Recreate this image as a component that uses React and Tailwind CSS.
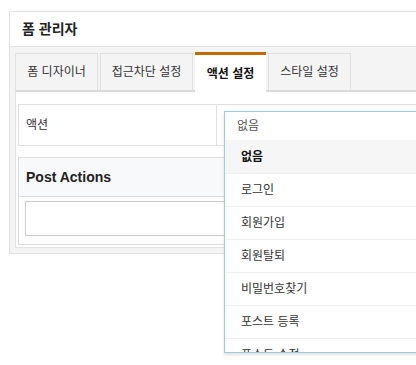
import React from 'react';

const tabs = [
  { label: '폼 디자이너', w: 'w-[83px]' },
  { label: '접근차단 설정', w: 'w-[93px]' },
  { label: '액션 설정', w: 'w-[71px]', active: true },
  { label: '스타일 설정', w: 'w-[83px]' },
];

const options = ['없음', '로그인', '회원가입', '회원탈퇴', '비밀번호찾기', '포스트 등록', '포스트 수정'];

export default function App() {
  return (
    <div
      className="relative w-[416px] h-[365px] overflow-hidden bg-white pt-[11px] pl-[9px] text-[#333]"
      style={{ fontFamily: '"Liberation Sans", "Noto Sans CJK KR", sans-serif' }}
    >
      {/* Form manager panel */}
      <div className="w-[430px] border border-[#e2e2e2] bg-[#f4f4f4]">
        <div className="h-[35px] bg-white border-b border-[#e2e2e2] flex items-center px-[12px]">
          <span className="text-[14px] font-bold text-[#222] leading-none">폼 관리자</span>
        </div>

        <div className="pt-[5px] px-[5px] pb-[5px]">
          {/* Tabs */}
          <div className="flex items-end gap-[2px] border-b-2 border-[#dadada]">
            {tabs.map((t) =>
              t.active ? (
                <div
                  key={t.label}
                  className={`${t.w} h-[40px] -mb-[2px] bg-white border-t-[3px] border-t-[#c46a00] flex items-center justify-center text-[12px] font-bold text-[#111]`}
                >
                  {t.label}
                </div>
              ) : (
                <div
                  key={t.label}
                  className={`${t.w} h-[37px] border border-b-0 border-[#e0e0e0] flex items-center justify-center text-[12px] text-[#333]`}
                >
                  {t.label}
                </div>
              )
            )}
          </div>

          {/* Tab content */}
          <div className="bg-white border border-t-0 border-[#e2e2e2] px-[2px] pt-[12px] pb-[2px]">
            <div className="h-[42px] border border-[#e0e0e0] flex">
              <div className="w-[198px] border-r border-[#e0e0e0] flex items-center px-[7px] text-[12px] text-[#333]">
                액션
              </div>
              <div className="flex-1" />
            </div>

            <div className="mt-[11px] border border-[#dddddd]">
              <div className="h-[39px] bg-[#f8f9fa] border-b border-[#dddddd] flex items-center px-[7px]">
                <span className="text-[14px] font-bold text-[#222]">Post Actions</span>
              </div>
              <div className="px-[6px] pt-[4px] pb-[8px]">
                <div className="h-[35px] border border-[#cccccc]" />
              </div>
            </div>
          </div>
        </div>
      </div>

      {/* Open select dropdown */}
      <div className="absolute left-[224px] top-[111px] w-[260px] h-[242px] border border-[#9fcbe0] bg-white shadow-[0_2px_3px_rgba(0,0,0,0.12)] overflow-hidden">
        <div className="h-[28px] flex items-center px-[12px] text-[12px] text-[#555]">없음</div>
        {options.map((o, i) => (
          <div
            key={o}
            className={`h-[33px] flex items-center px-[16px] text-[12px] ${
              i === 0 ? 'bg-[#f6f6f6] font-bold text-[#111]' : 'border-t border-[#f0f0f0] text-[#333]'
            }`}
          >
            {o}
          </div>
        ))}
      </div>
    </div>
  );
}
